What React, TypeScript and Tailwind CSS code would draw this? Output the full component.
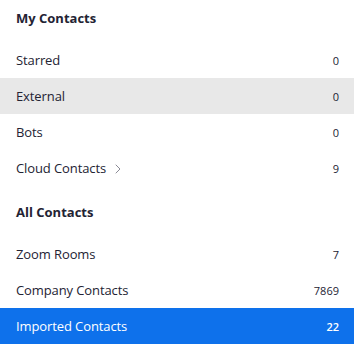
import { ChevronRight } from "lucide-react";

type Row = { label: string; count: string; chevron?: boolean; state?: "hover" | "active" };

const myContacts: Row[] = [
  { label: "Starred", count: "0" },
  { label: "External", count: "0", state: "hover" },
  { label: "Bots", count: "0" },
  { label: "Cloud Contacts", count: "9", chevron: true },
];

const allContacts: Row[] = [
  { label: "Zoom Rooms", count: "7" },
  { label: "Company Contacts", count: "7869" },
  { label: "Imported Contacts", count: "22", state: "active" },
];

const ContactRow = ({ row }: { row: Row }) => {
  const bg =
    row.state === "active"
      ? "bg-[#0e71eb] text-white"
      : row.state === "hover"
      ? "bg-[#e8e8e8] text-[#232333]"
      : "text-[#232333]";
  return (
    <div className={`h-9 flex items-center justify-between pt-0.5 pl-4 pr-[15px] ${bg}`}>
      <div className="flex items-center text-[13px] tracking-[-0.1px]">
        <span>{row.label}</span>
        {row.chevron && <ChevronRight size={16} strokeWidth={1.5} className="ml-1 text-[#8a8a95]" />}
      </div>
      <span className={`text-[11px] ${row.state === "active" ? "font-semibold" : ""}`}>{row.count}</span>
    </div>
  );
};

const Section = ({ title, rows, first }: { title: string; rows: Row[]; first?: boolean }) => (
  <div className={first ? "" : "mt-2"}>
    <div className="h-9 flex items-center pt-px px-4 text-[13px] font-bold text-[#232333]">{title}</div>
    <div className="pt-1.5">
      {rows.map((r) => (
        <ContactRow key={r.label} row={r} />
      ))}
    </div>
  </div>
);

export default function App() {
  return (
    <div
      className="w-[354px] h-[364px] bg-white overflow-hidden"
      style={{ fontFamily: '"Open Sans", "Noto Sans", sans-serif' }}
    >
      <Section title="My Contacts" rows={myContacts} first />
      <Section title="All Contacts" rows={allContacts} />
    </div>
  );
}
